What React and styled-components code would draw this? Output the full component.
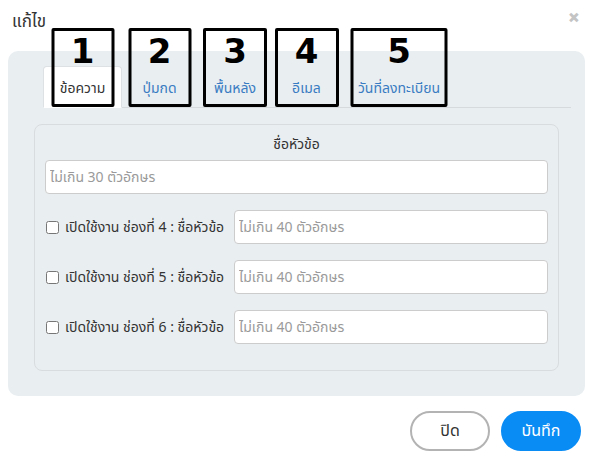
import styled, { createGlobalStyle } from "styled-components";

const GlobalStyle = createGlobalStyle`
  body {
    margin: 0;
    background: #ffffff;
    font-family: "Noto Sans Thai", "Noto Sans", "DejaVu Sans", sans-serif;
    color: #333;
  }
`;

const Modal = styled.div`
  width: 590px;
  height: 463px;
  box-sizing: border-box;
  padding: 8px 5px 0 8px;
  display: flex;
  flex-direction: column;
`;

const Header = styled.div`
  display: flex;
  justify-content: space-between;
  align-items: flex-start;
  height: 43px;
`;

const Title = styled.h4`
  margin: 2px 0 0 4px;
  font-size: 17px;
  font-weight: 400;
  line-height: 24px;
  color: #333;
`;

const Close = styled.span`
  margin: 1px 5px 0 0;
  font-size: 21px;
  font-weight: 900;
  color: #c4c4c4;
  line-height: 20px;
`;

const Panel = styled.div`
  background: #e9eef1;
  border-radius: 10px;
  padding: 15px 0 25px 0;
  display: flex;
  flex-direction: column;
  gap: 16px;
`;

const Nav = styled.ul`
  list-style: none;
  margin: 0 14px 0 35px;
  padding: 0;
  display: flex;
  border-bottom: 1px solid #d6dadd;
  height: 41px;
`;

const Tab = styled.li`
  position: relative;
  box-sizing: border-box;
  width: ${(p) => p.$w}px;
  height: 42px;
  margin-right: 2px;
  display: flex;
  align-items: center;
  justify-content: center;
  padding-top: 2px;
  font-size: 14px;
  white-space: nowrap;
  color: ${(p) => (p.$active ? "#333" : "#3a7cc2")};
  background: ${(p) => (p.$active ? "#fff" : "transparent")};
  border: 1px solid ${(p) => (p.$active ? "#dde1e4" : "transparent")};
  border-bottom-color: transparent;
  border-radius: 4px 4px 0 0;
`;

const Badge = styled.span`
  position: absolute;
  top: -39px;
  bottom: 0;
  left: 50%;
  transform: translateX(-50%);
  width: ${(p) => p.$w}px;
  box-sizing: border-box;
  border: 3px solid #000;
  border-radius: 2px;
  display: flex;
  justify-content: center;
  font-family: "DejaVu Sans", sans-serif;
  font-weight: 900;
  font-size: 34px;
  line-height: 40px;
  color: #000;
`;

const Card = styled.div`
  margin: 0 26px;
  border: 1px solid #d8dcdf;
  border-radius: 8px;
  padding: 7px 10px 26px 10px;
  display: flex;
  flex-direction: column;
`;

const Label = styled.div`
  text-align: center;
  font-size: 14px;
  line-height: 26px;
  margin-bottom: 2px;
`;

const Input = styled.input`
  box-sizing: border-box;
  height: 34px;
  width: 100%;
  border: 1px solid #cccccc;
  border-radius: 4px;
  background: #fff;
  padding: 0 4px;
  font-family: inherit;
  font-size: 14px;
  color: #333;
  &::placeholder {
    color: #9a9a9a;
  }
`;

const Row = styled.div`
  display: flex;
  align-items: center;
  margin-top: 16px;
`;

const Check = styled.input`
  width: 13px;
  height: 13px;
  margin: 0 6px 0 1px;
`;

const RowLabel = styled.span`
  font-size: 14px;
  white-space: nowrap;
  width: 169px;
  flex-shrink: 0;
`;

const Footer = styled.div`
  display: flex;
  justify-content: flex-end;
  gap: 11px;
  padding: 15px 4px 0 0;
`;

const Button = styled.button`
  width: 80px;
  height: 40px;
  border-radius: 20px;
  font-family: inherit;
  font-size: 16px;
  cursor: pointer;
  border: 2px solid ${(p) => (p.$primary ? "#0a8cf5" : "#b3b3b3")};
  background: ${(p) => (p.$primary ? "#0a8cf5" : "#fff")};
  color: ${(p) => (p.$primary ? "#fff" : "#333")};
`;

const tabs = [
  { label: "ข้อความ", w: 79, bw: 63, active: true },
  { label: "ปุ่มกด", w: 71, bw: 63 },
  { label: "พื้นหลัง", w: 76, bw: 64 },
  { label: "อีเมล", w: 63, bw: 64 },
  { label: "วันที่ลงทะเบียน", w: 118, bw: 97 },
];

const App = () => {
  return (
    <>
      <GlobalStyle />
      <Modal>
        <Header>
          <Title>แก้ไข</Title>
          <Close>×</Close>
        </Header>
        <Panel>
          <Nav>
            {tabs.map((t, i) => (
              <Tab key={t.label} $w={t.w} $active={t.active}>
                {t.label}
                <Badge $w={t.bw}>{i + 1}</Badge>
              </Tab>
            ))}
          </Nav>
          <Card>
            <Label>ชื่อหัวข้อ</Label>
            <Input placeholder="ไม่เกิน 30 ตัวอักษร" />
            {[4, 5, 6].map((n) => (
              <Row key={n}>
                <Check type="checkbox" />
                <RowLabel>เปิดใช้งาน ช่องที่ {n} : ชื่อหัวข้อ</RowLabel>
                <Input placeholder="ไม่เกิน 40 ตัวอักษร" />
              </Row>
            ))}
          </Card>
        </Panel>
        <Footer>
          <Button>ปิด</Button>
          <Button $primary>บันทึก</Button>
        </Footer>
      </Modal>
    </>
  );
};

export default App;
